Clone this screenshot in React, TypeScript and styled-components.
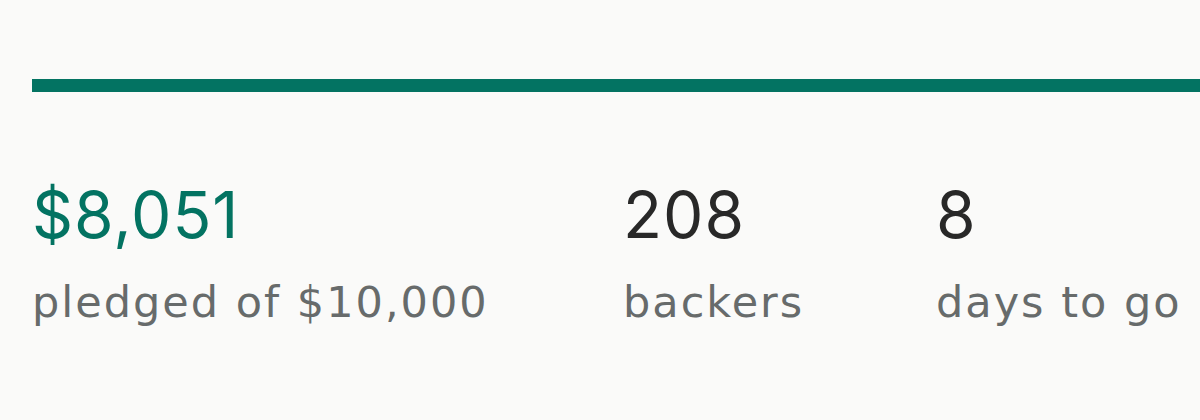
import React from "react";
import styled, { createGlobalStyle } from "styled-components";

const Global = createGlobalStyle`
  html, body { margin: 0; padding: 0; background: #fafaf9; }
  body { font-family: Inter, "Noto Sans", sans-serif; }
`;

const Page = styled.div`
  width: 1200px;
  height: 420px;
  box-sizing: border-box;
  padding: 79px 0 0 32px;
  overflow: hidden;
`;

const Track = styled.div`
  height: 13px;
  background: #e6e6e6;
  margin-right: -20px;
`;

const Fill = styled.div`
  height: 100%;
  background: #037362;
`;

const Stats = styled.div`
  display: grid;
  grid-template-columns: 591px 313px 1fr;
  margin-top: 84px;
`;

const Stat = styled.div`
  display: flex;
  flex-direction: column;
`;

const Value = styled.div<{ $accent?: boolean }>`
  font-size: 64px;
  line-height: 78px;
  color: ${(p) => (p.$accent ? "#037362" : "#282828")};
  letter-spacing: 1px;
`;

const Label = styled.div`
  margin-top: 20px;
  font-family: "DejaVu Sans", Inter, sans-serif;
  font-size: 43px;
  line-height: 56px;
  color: #676b6b;
  letter-spacing: 2px;
`;

const stats = [
  { value: "$8,051", label: "pledged of $10,000", accent: true },
  { value: "208", label: "backers" },
  { value: "8", label: "days to go" },
];

export default function App() {
  return (
    <>
      <Global />
      <Page>
        <Track>
          <Fill style={{ width: "100%" }} />
        </Track>
        <Stats>
          {stats.map((s) => (
            <Stat key={s.label}>
              <Value $accent={s.accent}>{s.value}</Value>
              <Label>{s.label}</Label>
            </Stat>
          ))}
        </Stats>
      </Page>
    </>
  );
}
